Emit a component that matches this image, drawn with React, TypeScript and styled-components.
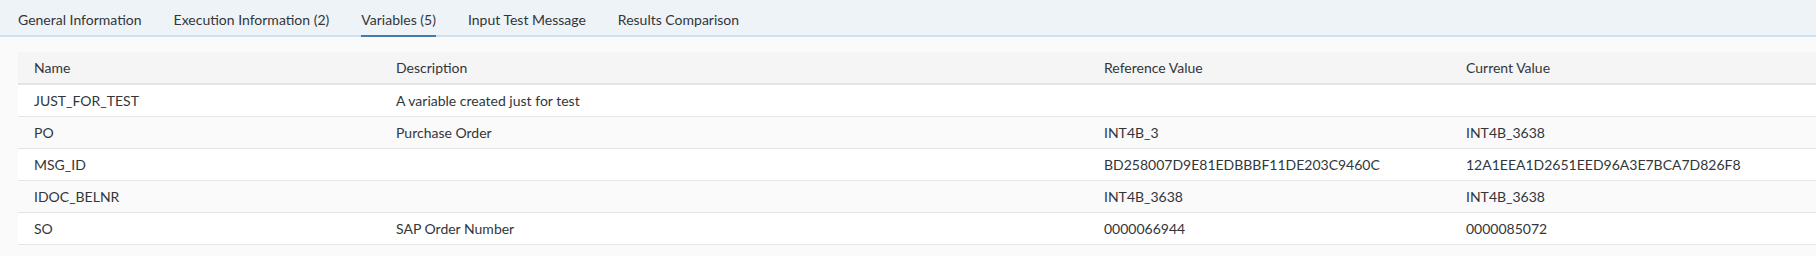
import React from 'react'
import styled, { createGlobalStyle } from 'styled-components'

const GlobalStyle = createGlobalStyle`
  html, body {
    margin: 0;
    padding: 0;
    background: #fafafa;
    font-family: Lato, "Liberation Sans", Arial, sans-serif;
    font-size: 14px;
    color: #32363a;
  }
`

const TabBar = styled.div`
  display: flex;
  height: 37px;
  padding-left: 18px;
  background: #eef3f8;
  box-shadow: inset 0 -2px 0 #d1e0ee;
  box-sizing: border-box;
`
const Tab = styled.div<{ $active?: boolean }>`
  height: 37px;
  box-sizing: border-box;
  padding-top: 12px;
  line-height: 16px;
  margin-right: 32px;
  white-space: nowrap;
  color: #32363a;
  border-bottom: 2px solid ${({ $active }) => ($active ? '#427cac' : 'transparent')};
  cursor: pointer;
`
const Content = styled.div`
  padding: 15px 0 0 18px;
`
const Table = styled.table`
  width: 100%;
  border-collapse: collapse;
  table-layout: fixed;
  border-bottom: 1px solid #cccccc;
`
const HeadCell = styled.th`
  height: 32px;
  padding: 0 16px;
  text-align: left;
  font-weight: normal;
  color: #32363a;
  background: #f5f5f5;
  border-bottom: 2px solid #e5e5e5;
  box-sizing: border-box;
`
const Row = styled.tr<{ $alt?: boolean }>`
  background: ${({ $alt }) => ($alt ? '#fafafa' : '#ffffff')};
  border-bottom: 1px solid #e5e5e5;
`
const Cell = styled.td`
  height: 31px;
  padding: 0 16px;
  white-space: nowrap;
  overflow: hidden;
`

const tabs = [
  'General Information',
  'Execution Information (2)',
  'Variables (5)',
  'Input Test Message',
  'Results Comparison',
]

const variables = [
  { name: 'JUST_FOR_TEST', desc: 'A variable created just for test', ref: '', cur: '' },
  { name: 'PO', desc: 'Purchase Order', ref: 'INT4B_3', cur: 'INT4B_3638' },
  { name: 'MSG_ID', desc: '', ref: 'BD258007D9E81EDBBBF11DE203C9460C', cur: '12A1EEA1D2651EED96A3E7BCA7D826F8' },
  { name: 'IDOC_BELNR', desc: '', ref: 'INT4B_3638', cur: 'INT4B_3638' },
  { name: 'SO', desc: 'SAP Order Number', ref: '0000066944', cur: '0000085072' },
]

const App = (): JSX.Element => {
  return (
    <>
      <GlobalStyle />
      <TabBar>
        {tabs.map((t) => (
          <Tab key={t} $active={t === 'Variables (5)'}>
            {t}
          </Tab>
        ))}
      </TabBar>
      <Content>
        <Table>
          <colgroup>
            <col style={{ width: 362 }} />
            <col style={{ width: 708 }} />
            <col style={{ width: 362 }} />
            <col />
          </colgroup>
          <thead>
            <tr>
              <HeadCell>Name</HeadCell>
              <HeadCell>Description</HeadCell>
              <HeadCell>Reference Value</HeadCell>
              <HeadCell>Current Value</HeadCell>
            </tr>
          </thead>
          <tbody>
            {variables.map((v, i) => (
              <Row key={v.name} $alt={i % 2 === 1}>
                <Cell>{v.name}</Cell>
                <Cell>{v.desc}</Cell>
                <Cell>{v.ref}</Cell>
                <Cell>{v.cur}</Cell>
              </Row>
            ))}
          </tbody>
        </Table>
      </Content>
    </>
  )
}

export default App
